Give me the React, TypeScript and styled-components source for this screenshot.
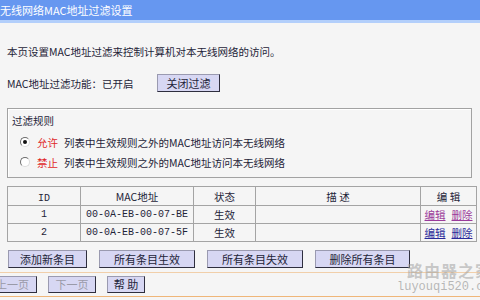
import React from 'react';
import styled, { createGlobalStyle } from 'styled-components';

const GlobalStyle = createGlobalStyle`
    html, body {
        margin: 0;
        padding: 0;
        background: #f5f5f5;
    }
    body {
        width: 480px;
        height: 300px;
        overflow: hidden;
        font-family: "Noto Sans CJK SC", sans-serif;
        font-size: 10.5px;
        color: #1e2438;
    }
`;

const Page = styled.div`
    position: relative;
    width: 480px;
    height: 300px;
    overflow: hidden;
`;

const Header = styled.div`
    height: 20px;
    line-height: 20px;
    background: #6697f0;
    border-bottom: 3px solid #b3cffb;
    color: #fff;
    font-size: 11px;
    white-space: nowrap;
`;

const Content = styled.div`
    padding: 0 8px 0 7px;
`;

const Intro = styled.div`
    margin-top: 21px;
    line-height: 16px;
`;

const StatusRow = styled.div`
    display: flex;
    align-items: center;
    margin-top: 14px;
    height: 18px;
`;

const StatusLabel = styled.span`
    width: 150px;
`;

const Button = styled.button<{ $width: number; $disabled?: boolean; $height?: number }>`
    box-sizing: border-box;
    width: ${p => p.$width}px;
    height: ${p => p.$height ?? 18}px;
    padding: 0;
    background: #d7d7f3;
    border: 1px solid;
    border-color: #9a9ab0 #2e2e3e #2e2e3e #9a9ab0;
    font-family: "Noto Sans CJK SC", sans-serif;
    font-size: 11px;
    line-height: 1;
    color: ${p => (p.$disabled ? '#9a9aa8' : '#1e2438')};
    cursor: pointer;
`;

const RuleBox = styled.div`
    box-sizing: border-box;
    margin-top: 16px;
    height: 70px;
    border: 1px solid #a2a2a2;
    box-shadow: inset 1px 1px 0 #fff;
    padding: 4px 0 0 4px;
`;

const Legend = styled.div`
    line-height: 16px;
    margin-bottom: 3px;
`;

const RuleRow = styled.div`
    display: flex;
    align-items: center;
    height: 20px;
    padding-left: 8px;
    white-space: nowrap;
`;

const Radio = styled.span<{ $checked?: boolean }>`
    position: relative;
    box-sizing: border-box;
    width: 10px;
    height: 10px;
    border-radius: 50%;
    border: 1px solid;
    border-color: #6d6d6d #dcdcdc #dcdcdc #6d6d6d;
    background: #fff;
    margin-right: 7px;
    &::after {
        content: '';
        display: ${p => (p.$checked ? 'block' : 'none')};
        position: absolute;
        left: 2px;
        top: 2px;
        width: 4px;
        height: 4px;
        border-radius: 50%;
        background: #111;
    }
`;

const Mode = styled.span`
    color: #e02828;
    margin-right: 6px;
`;

const Table = styled.table`
    margin-top: 8px;
    width: 464px;
    border-collapse: collapse;
    table-layout: fixed;
    font-size: 10.5px;
`;

const Th = styled.th<{ $width: number }>`
    width: ${p => p.$width}px;
    height: 18px;
    padding: 0;
    border: 1px solid #a4a4a4;
    font-weight: normal;
    text-align: center;
`;

const Td = styled.td<{ $mono?: boolean }>`
    height: 17px;
    padding: 0;
    border: 1px solid #a4a4a4;
    text-align: center;
    font-family: ${p => (p.$mono ? '"Liberation Mono", monospace' : 'inherit')};
    font-size: ${p => (p.$mono ? '10px' : 'inherit')};
`;

const Mono = styled.span`
    font-family: "Liberation Mono", monospace;
    font-size: 10px;
`;

const EditLink = styled.a<{ $visited?: boolean }>`
    color: ${p => (p.$visited ? '#9a3a9a' : '#2a2a9a')};
    text-decoration: underline;
    margin: 0 3px;
    cursor: pointer;
`;

const ActionRow = styled.div`
    display: flex;
    gap: 12px;
    margin-top: 8px;
    padding-left: 1px;
`;

const Footer = styled.div`
    margin-top: 4px;
    border-top: 1px solid #f1cfaa;
    border-bottom: 1px solid #efb679;
    height: 23px;
    display: flex;
    align-items: center;
    gap: 11px;
    padding-left: 0;
`;

const PagerFirst = styled.div`
    margin-left: -12px;
    display: flex;
`;

const Watermark = styled.div`
    position: absolute;
    left: 397px;
    top: 260px;
    pointer-events: none;
    white-space: nowrap;
`;

const WatermarkTitle = styled.div`
    margin-left: 10px;
    font-size: 16px;
    font-weight: bold;
    line-height: 20px;
    color: rgba(160, 160, 160, 0.55);
    letter-spacing: 1px;
`;

const WatermarkUrl = styled.div`
    font-family: "Liberation Mono", monospace;
    font-size: 12px;
    line-height: 15px;
    color: rgba(140, 140, 140, 0.6);
`;

const rows = [
    { id: 1, mac: '00-0A-EB-00-07-BE', visited: true },
    { id: 2, mac: '00-0A-EB-00-07-5F', visited: false },
];

const App = () => {
    return (
        <Page>
            <GlobalStyle />
            <Header>无线网络MAC地址过滤设置</Header>
            <Content>
                <Intro>本页设置MAC地址过滤来控制计算机对本无线网络的访问。</Intro>
                <StatusRow>
                    <StatusLabel>MAC地址过滤功能：已开启</StatusLabel>
                    <Button $width={63}>关闭过滤</Button>
                </StatusRow>
                <RuleBox>
                    <Legend>过滤规则</Legend>
                    <RuleRow>
                        <Radio $checked />
                        <Mode>允许</Mode>
                        列表中生效规则之外的MAC地址访问本无线网络
                    </RuleRow>
                    <RuleRow>
                        <Radio />
                        <Mode>禁止</Mode>
                        列表中生效规则之外的MAC地址访问本无线网络
                    </RuleRow>
                </RuleBox>
                <Table>
                    <thead>
                        <tr>
                            <Th $width={72}><Mono>ID</Mono></Th>
                            <Th $width={112}>MAC地址</Th>
                            <Th $width={61}>状态</Th>
                            <Th $width={164}>描 述</Th>
                            <Th $width={55}>编 辑</Th>
                        </tr>
                    </thead>
                    <tbody>
                        {rows.map(r => (
                            <tr key={r.id}>
                                <Td $mono>{r.id}</Td>
                                <Td $mono>{r.mac}</Td>
                                <Td>生效</Td>
                                <Td></Td>
                                <Td>
                                    <EditLink $visited={r.visited}>编辑</EditLink>
                                    <EditLink $visited={r.visited}>删除</EditLink>
                                </Td>
                            </tr>
                        ))}
                    </tbody>
                </Table>
                <ActionRow>
                    <Button $width={79}>添加新条目</Button>
                    <Button $width={96}>所有条目生效</Button>
                    <Button $width={96}>所有条目失效</Button>
                    <Button $width={95}>删除所有条目</Button>
                </ActionRow>
            </Content>
            <Footer>
                <PagerFirst>
                    <Button $width={49} $height={17} $disabled>上一页</Button>
                </PagerFirst>
                <Button $width={48} $height={17} $disabled>下一页</Button>
                <Button $width={38} $height={17}>帮 助</Button>
            </Footer>
            <Watermark>
                <WatermarkTitle>路由器之家</WatermarkTitle>
                <WatermarkUrl>luyouqi520.com</WatermarkUrl>
            </Watermark>
        </Page>
    );
};

export default App;
